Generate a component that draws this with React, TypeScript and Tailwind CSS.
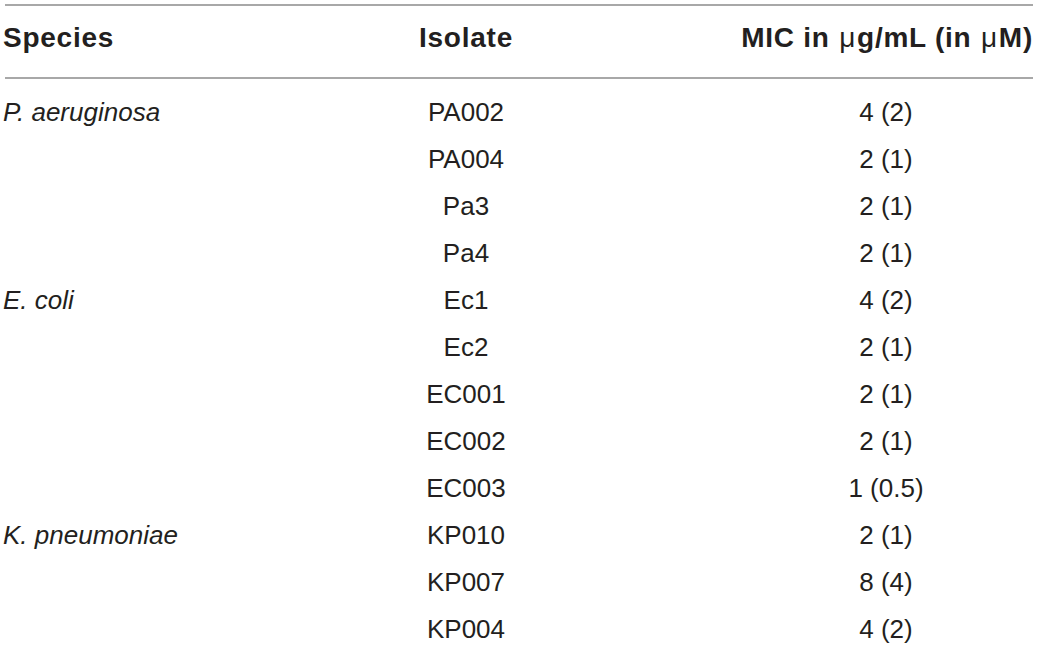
import React from 'react';

type Row = { species?: string; isolate: string; mic: string };

const rows: Row[] = [
  { species: 'P. aeruginosa', isolate: 'PA002', mic: '4 (2)' },
  { isolate: 'PA004', mic: '2 (1)' },
  { isolate: 'Pa3', mic: '2 (1)' },
  { isolate: 'Pa4', mic: '2 (1)' },
  { species: 'E. coli', isolate: 'Ec1', mic: '4 (2)' },
  { isolate: 'Ec2', mic: '2 (1)' },
  { isolate: 'EC001', mic: '2 (1)' },
  { isolate: 'EC002', mic: '2 (1)' },
  { isolate: 'EC003', mic: '1 (0.5)' },
  { species: 'K. pneumoniae', isolate: 'KP010', mic: '2 (1)' },
  { isolate: 'KP007', mic: '8 (4)' },
  { isolate: 'KP004', mic: '4 (2)' },
];

const Mu = () => <span className="font-normal px-[1px]">μ</span>;

export default function App() {
  return (
    <div className="w-[1039px] h-[654px] bg-white text-[#231f20] font-['Liberation_Sans',Arial,sans-serif] pt-[4px] overflow-hidden">
      <div className="ml-[5px] w-[1028px] h-[2px] bg-[#a8a8a8]" />
      <div className="w-[1033px] grid grid-cols-[380px_172px_481px] pt-[8px] pb-[15px] text-[28px] font-bold tracking-[0.75px] leading-[48px]">
        <div className="pl-[3px]">Species</div>
        <div className="text-center">Isolate</div>
        <div className="flex justify-end">
          <div className="w-[294px] text-right whitespace-nowrap">
            MIC in <Mu />g/mL (in <Mu />M)
          </div>
        </div>
      </div>
      <div className="ml-[5px] w-[1028px] h-[2px] bg-[#a8a8a8]" />
      <div className="w-[1033px] pt-[10px] text-[26px] leading-[47px]">
        {rows.map((r) => (
          <div key={r.isolate} className="grid grid-cols-[380px_172px_481px]">
            <div className="pl-[3px] italic">{r.species ?? ''}</div>
            <div className="text-center">{r.isolate}</div>
            <div className="flex justify-end">
              <div className="w-[294px] text-center">{r.mic}</div>
            </div>
          </div>
        ))}
      </div>
    </div>
  );
}
